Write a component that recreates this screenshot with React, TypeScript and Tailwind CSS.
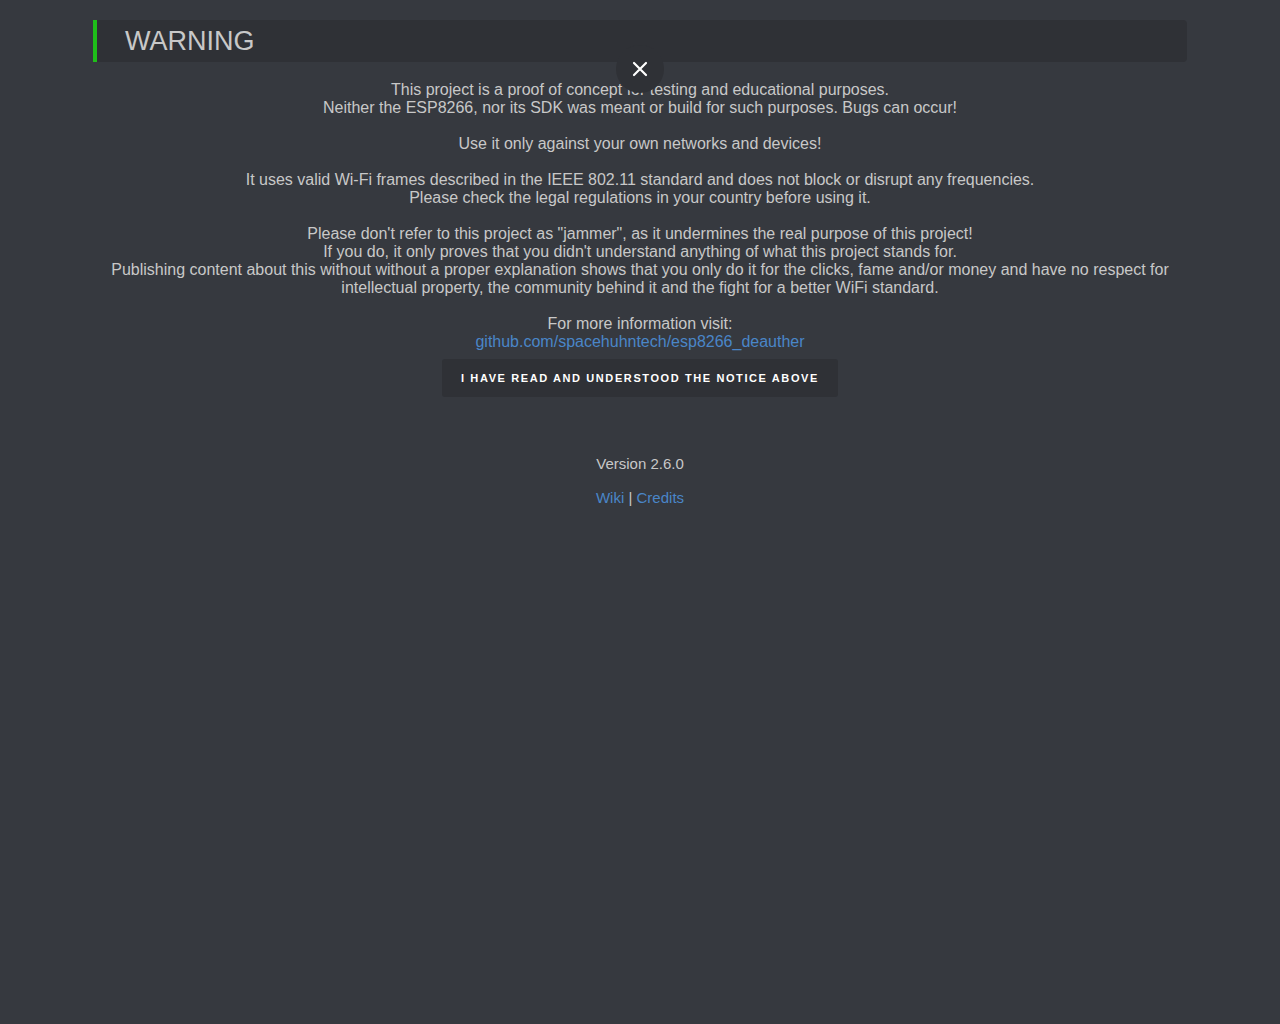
const lines: string[][] = [
  [
    "This project is a proof of concept for testing and educational purposes.",
    "Neither the ESP8266, nor its SDK was meant or build for such purposes. Bugs can occur!",
  ],
  ["Use it only against your own networks and devices!"],
  [
    "It uses valid Wi-Fi frames described in the IEEE 802.11 standard and does not block or disrupt any frequencies.",
    "Please check the legal regulations in your country before using it.",
  ],
  [
    "Please don't refer to this project as \"jammer\", as it undermines the real purpose of this project!",
    "If you do, it only proves that you didn't understand anything of what this project stands for.",
    "Publishing content about this without without a proper explanation shows that you only do it for the clicks, fame and/or money and have no respect for intellectual property, the community behind it and the fight for a better WiFi standard.",
  ],
];

const App = () => {
  return (
    <div className="min-h-screen bg-[#36393f] text-[#c8c8c8] text-[16px] leading-[18px] font-['Liberation_Sans',Arial,sans-serif]">
      <div className="w-[1094px] mx-auto pt-[20px] relative">
        <div className="h-[42px] bg-[#2f3136] border-l-4 border-[#1fbf1a] rounded-r-[4px] flex items-center pl-[28px]">
          <h1 className="text-[27px] leading-none text-[#c8c8c8]">WARNING</h1>
        </div>
        <button className="absolute left-[523px] top-[45px] w-[48px] h-[48px] rounded-full bg-[#2f3136] flex items-center justify-center">
          <svg width="16" height="16" viewBox="0 0 16 16" stroke="#ffffff" strokeWidth="2.2" strokeLinecap="round">
            <path d="M2 2 L14 14 M14 2 L2 14" />
          </svg>
        </button>
        <div className="text-center pt-[19px]">
          {lines.map((para, i) => (
            <p key={i} className="mb-[18px]">
              {para.map((l, j) => (
                <span key={j} className="block">
                  {l}
                </span>
              ))}
            </p>
          ))}
          <p>
            For more information visit:
            <br />
            <a className="text-[#4a86c8]" href="#">
              github.com/spacehuhntech/esp8266_deauther
            </a>
          </p>
          <div className="flex justify-center pt-[8px]">
            <button className="h-[38px] px-[19px] bg-[#2f3136] rounded-[3px] text-white text-[11px] font-bold tracking-[1.6px] uppercase">
              I have read and understood the notice above
            </button>
          </div>
          <div className="pt-[58px] text-[15px]">
            <p>Version 2.6.0</p>
            <p className="mt-[16px]">
              <a className="text-[#4a86c8]" href="#">
                Wiki
              </a>{" "}
              |{" "}
              <a className="text-[#4a86c8]" href="#">
                Credits
              </a>
            </p>
          </div>
        </div>
      </div>
    </div>
  );
};

export default App;
